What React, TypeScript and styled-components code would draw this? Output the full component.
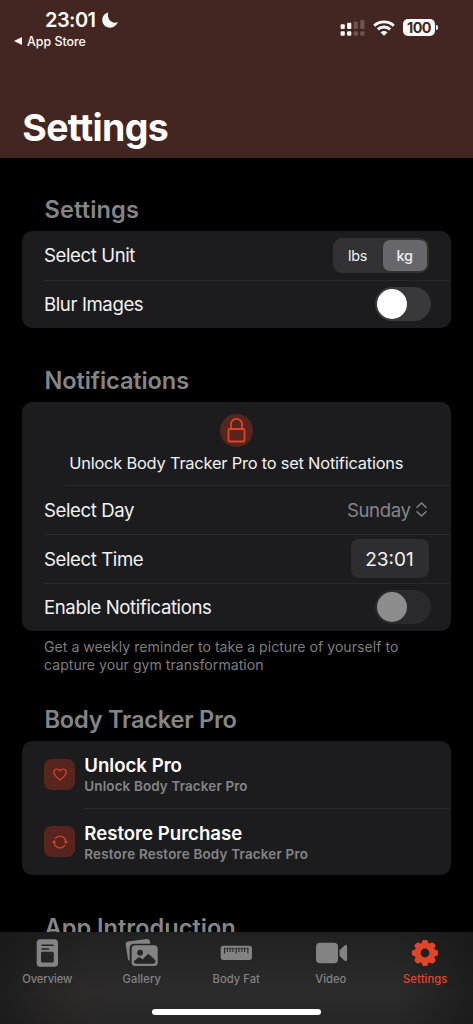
import React from 'react';
import styled, { createGlobalStyle } from 'styled-components';

const Global = createGlobalStyle`
  * { box-sizing: border-box; }
  body { margin: 0; background: #000; }
`;

const Screen = styled.div`
  width: 473px;
  height: 1024px;
  display: flex;
  flex-direction: column;
  overflow: hidden;
  background: #000;
  color: #f2f2f3;
  font-family: Inter, 'Liberation Sans', sans-serif;
`;

const Header = styled.header`
  height: 158px;
  flex: none;
  background: #432621;
  display: flex;
  flex-direction: column;
  color: #fffdfb;
`;

const StatusBar = styled.div`
  display: flex;
  justify-content: space-between;
  align-items: center;
  height: 20px;
  margin-top: 10px;
  padding: 0 38px 0 45px;
`;

const StatusGroup = styled.div<{ $gap: number; $top?: number }>`
  display: flex;
  align-items: center;
  gap: ${(p) => p.$gap}px;
  padding-top: ${(p) => p.$top ?? 0}px;
`;

const Clock = styled.span`
  font-size: 20px;
  line-height: 20px;
  font-weight: 600;
  letter-spacing: -0.55px;
  width: 52px;
  white-space: nowrap;
`;

const Battery = styled.div`
  position: relative;
  width: 32px;
  height: 17px;
  border-radius: 5px;
  background: #fffdfb;
  color: #432621;
  font-size: 14.4px;
  font-weight: 700;
  line-height: 17px;
  text-align: center;
  letter-spacing: -0.6px;
  &::after {
    content: '';
    position: absolute;
    right: -3px;
    top: 6px;
    width: 2px;
    height: 5px;
    border-radius: 0 2px 2px 0;
    background: #fffdfb;
  }
`;

const BackLink = styled.div`
  display: flex;
  align-items: center;
  gap: 5px;
  height: 16px;
  margin-top: 3px;
  padding-left: 14px;
  font-size: 12.4px;
  font-weight: 500;
  letter-spacing: 0;
`;

const Title = styled.h1`
  margin: auto 0 7px 22.3px;
  font-size: 37.5px;
  line-height: 46px;
  font-weight: 700;
  letter-spacing: -0.68px;
`;

const Content = styled.main`
  flex: 1;
  min-height: 0;
  overflow: hidden;
  padding: 0 22.5px 0 22px;
`;

const Section = styled.section<{ $top: number }>`
  padding-top: ${(p) => p.$top}px;
`;

const Heading = styled.h2<{ $track: number }>`
  margin: 0 0 7px 22.5px;
  font-size: 23.6px;
  line-height: 28px;
  font-weight: 600;
  letter-spacing: ${(p) => p.$track}px;
  color: #858586;
  white-space: nowrap;
`;

const Card = styled.div`
  border-radius: 10.5px;
  background: #1c1c1e;
  overflow: hidden;
`;

const Row = styled.div`
  height: 48.5px;
  margin-left: 22px;
  padding-right: 22px;
  display: flex;
  align-items: center;
  justify-content: space-between;
  & + & {
    padding-top: 1px;
    box-shadow: inset 0 1px #29292b;
  }
`;

const Label = styled.span<{ $track?: number }>`
  font-size: 18.6px;
  letter-spacing: ${(p) => p.$track ?? -0.4}px;
  white-space: nowrap;
`;

const Segmented = styled.div`
  width: 96px;
  height: 35px;
  padding: 2px;
  display: grid;
  grid-template-columns: 46px 44px;
  column-gap: 2px;
  border-radius: 9px;
  background: #323235;
`;

const Segment = styled.div<{ $on?: boolean }>`
  display: grid;
  place-items: center;
  border-radius: 7px;
  font-size: 14.4px;
  font-weight: ${(p) => (p.$on ? 500 : 400)};
  letter-spacing: -0.3px;
  background: ${(p) => (p.$on ? '#67666b' : 'transparent')};
`;

const Switch = styled.div<{ $disabled?: boolean }>`
  width: 56px;
  height: 34px;
  margin-right: -2px;
  padding: 2px;
  border-radius: 17px;
  background: ${(p) => (p.$disabled ? '#2a2a2c' : '#39393b')};
  &::before {
    content: '';
    display: block;
    width: 30px;
    height: 30px;
    border-radius: 50%;
    background: ${(p) => (p.$disabled ? '#8d8d8e' : '#fff')};
  }
`;

const LockedNotice = styled.div`
  height: 82.5px;
  display: flex;
  flex-direction: column;
  align-items: center;
  padding-top: 12px;
  gap: 5px;
`;

const NoticeText = styled.div`
  font-size: 16.4px;
  line-height: 22px;
  letter-spacing: -0.2px;
  white-space: nowrap;
`;

const LockBadge = styled.div`
  width: 33px;
  height: 33px;
  flex: none;
  border-radius: 50%;
  background: #57251d;
  display: grid;
  place-items: center;
`;

const Divider = styled.div<{ $inset: number }>`
  height: 1px;
  margin-left: ${(p) => p.$inset}px;
  background: #29292b;
`;

const Picker = styled.div`
  display: flex;
  align-items: center;
  gap: 5.5px;
  padding-right: 1.5px;
  color: #858587;
`;

const TimeField = styled.div`
  width: 78px;
  height: 39px;
  padding-top: 1px;
  border-radius: 8px;
  background: #2e2e31;
  display: grid;
  place-items: center;
  font-size: 19px;
  letter-spacing: 0;
`;

const Footnote = styled.p`
  margin: 7px 0 0 22px;
  font-size: 14.1px;
  line-height: 17.5px;
  letter-spacing: 0.02px;
  color: #7d7d7e;
  white-space: nowrap;
`;

const ProRow = styled.div`
  height: 66.5px;
  padding: 0 0 0 22px;
  display: flex;
  align-items: center;
  gap: 9.3px;
`;

const IconTile = styled.div`
  width: 31px;
  height: 31px;
  border-radius: 8px;
  background: #57251d;
  display: grid;
  place-items: center;
`;

const ProText = styled.div`
  padding-top: 2px;
`;

const ProTitle = styled.div<{ $track: number }>`
  font-size: 18.6px;
  line-height: 22px;
  font-weight: 600;
  letter-spacing: ${(p) => p.$track}px;
  color: #fff;
`;

const ProCaption = styled.div<{ $track: number }>`
  font-size: 13.4px;
  line-height: 20px;
  font-weight: 600;
  letter-spacing: ${(p) => p.$track}px;
  color: #858587;
`;

const TabBar = styled.nav`
  position: relative;
  flex: none;
  height: 92px;
  display: grid;
  grid-template-columns: repeat(5, 94.5px);
  background:
    radial-gradient(ellipse 60px 40px at 66px 70px, rgba(72, 38, 34, 0.14), transparent),
    linear-gradient(90deg, rgba(20, 20, 20, 0.6), transparent 18%, transparent 84%, rgba(20, 20, 20, 0.6)),
    linear-gradient(#212122, #2b2b2c 65%, #262627);
`;

const Tab = styled.div<{ $active?: boolean }>`
  display: flex;
  flex-direction: column;
  align-items: center;
  padding-top: 5px;
  gap: 1.5px;
  color: ${(p) => (p.$active ? '#e0452b' : '#838383')};
`;

const TabLabel = styled.span<{ $track: number }>`
  font-size: 11.2px;
  line-height: 16px;
  font-weight: 500;
  letter-spacing: ${(p) => p.$track}px;
`;

const HomeIndicator = styled.div`
  position: absolute;
  left: 152px;
  bottom: 9px;
  width: 169px;
  height: 6px;
  border-radius: 3px;
  background: #fff;
`;

const MoonIcon = () => (
  <svg width="16" height="16" viewBox="0 0 16 16" fill="currentColor">
    <path d="M6.200.5C4.900 5.800 8 10.700 12.800 10.700c1.100 0 2.100-.2 3-.6C14.600 13.600 11.600 15.700 8.200 15.700 3.700 15.700.3 12.400.3 8 .3 4.500 2.600 1.400 6.200.5Z" />
  </svg>
);

const SignalIcon = () => (
  <svg width="25" height="17" viewBox="0 0 25 17" fill="#fffdfb">
    <rect x=".6" y="5.300" width="4.200" height="4.800" rx="1" />
    <rect x="7.100" y="3.800" width="4.200" height="6.300" rx="1" />
    <rect x="13.700" y="2.500" width="4.200" height="7.600" rx="1" opacity=".22" />
    <rect x="20.300" y=".7" width="4.200" height="9.400" rx="1" opacity=".22" />
    <rect x=".6" y="12.300" width="4.200" height="4.500" rx="1" />
    <rect x="7.100" y="12.300" width="4.200" height="4.500" rx="1" />
    <rect x="13.700" y="12.300" width="4.200" height="4.500" rx="1" opacity=".22" />
    <rect x="20.300" y="12.300" width="4.200" height="4.500" rx="1" opacity=".22" />
  </svg>
);

const WifiIcon = () => (
  <svg width="22" height="16" viewBox="0 0 22 16" fill="none" stroke="#fffdfb" strokeWidth="2.900">
    <path d="M1.200 5.700C6.800.6 15.200.6 20.800 5.700" />
    <path d="M4.800 9.400c3.500-3.200 8.900-3.200 12.400 0" />
    <path d="M11 15.800 7.500 12.400c2-1.800 5-1.800 7 0Z" fill="#fffdfb" stroke="none" />
  </svg>
);

const BackIcon = () => (
  <svg width="8" height="8" viewBox="0 0 8 8" fill="currentColor"><path d="M0 4 8 0v8Z" /></svg>
);

const LockIcon = () => (
  <svg width="19" height="27" viewBox="0 0 19 27" fill="none" stroke="#dc452c" strokeWidth="1.800">
    <rect x="1.500" y="12" width="16" height="12.500" rx="1.200" />
    <path d="M4 12V7.300a5.500 5.500 0 0 1 11 0V12" />
  </svg>
);

const ChevronsIcon = () => (
  <svg width="11" height="15" viewBox="0 0 11 15" fill="none" stroke="currentColor" strokeWidth="1.500" strokeLinecap="round" strokeLinejoin="round">
    <path d="M1 5.200 5.500 1 10 5.200M1 9.800 5.500 14 10 9.800" />
  </svg>
);

const HeartIcon = () => (
  <svg width="14" height="13" viewBox="0 0 14 13" fill="none" stroke="#dc452c" strokeWidth="1.200" strokeLinejoin="round">
    <path d="M7 12C3.500 9.500.9 7.100.9 4.300.9 2.400 2.300 1 4 1c1.300 0 2.400.7 3 1.900C7.600 1.700 8.700 1 10 1c1.700 0 3.100 1.400 3.100 3.300C13.100 7.100 10.500 9.500 7 12Z" />
  </svg>
);

const SyncIcon = () => (
  <svg width="16" height="14" viewBox="0 0 16 14" fill="none" stroke="#dc452c" strokeWidth="1.200" strokeLinecap="round">
    <path d="M3.400 3.400a5.800 5.800 0 0 1 10.400 3.400M12.600 10.600A5.800 5.800 0 0 1 2.200 7.200" />
    <path d="m11.700 6.300 2.100 2.600 2.100-2.600ZM.1 7.700 2.200 5.100l2.100 2.600Z" fill="#dc452c" stroke="none" />
  </svg>
);

const OverviewIcon = () => (
  <svg width="34" height="32" viewBox="0 0 34 32">
    <rect x="6.700" y="2.200" width="21.300" height="27.600" rx="3.600" fill="currentColor" />
    <path d="M12 8.200h11M12 12h6.500" stroke="#252526" strokeWidth="1.600" strokeLinecap="round" />
    <rect x="11" y="14.700" width="12.800" height="10.800" rx="1.600" fill="#252526" />
  </svg>
);

const GalleryIcon = () => (
  <svg width="34" height="32" viewBox="0 0 34 32">
    <g transform="translate(-.6 0)">
      <path d="M3.800 23.200 1.300 7.700c-.3-1.700.6-2.900 2.300-3.200L22.300 2c1.700-.2 2.900.6 3.200 2.200l.4 2.500H10.200c-3.200 0-5 1.800-5 5v11.700Z" fill="currentColor" />
      <rect x="7.300" y="8.300" width="26" height="20.700" rx="3.500" fill="currentColor" />
      <circle cx="15.700" cy="15.700" r="2.900" fill="#252526" />
      <path d="m9.500 24.300 4.300-3.700c.7-.6 1.400-.5 2 0l2.100 1.800 5-4.600c.7-.6 1.500-.6 2.200 0l5.900 5.500v1.200c0 1.600-.7 2.200-2.200 2.200h-17c-1.500 0-2.300-.8-2.300-2.400Z" fill="#252526" />
    </g>
  </svg>
);

const RulerIcon = () => (
  <svg width="34" height="32" viewBox="0 0 34 32">
    <rect x="1.700" y="8.800" width="31.300" height="14.200" rx="2.700" fill="currentColor" />
    <path d="M5.500 11v5.500M8.300 11v4M11.100 11v4M13.900 11v4M17.200 11v5.500M20 11v4M22.800 11v4M25.600 11v4M28.900 11v5.500" stroke="#252526" strokeWidth="1.100" />
    <path d="M5 11.300h24.400" stroke="#252526" strokeWidth=".7" />
  </svg>
);

const VideoIcon = () => (
  <svg width="34" height="32" viewBox="0 0 34 32" fill="currentColor">
    <rect x="2" y="5.800" width="22" height="20.500" rx="4" />
    <path d="M25.500 13.300 30.300 8.700c1.200-1.100 2.800-.8 2.800.9v12.900c0 1.700-1.600 2-2.800.9l-4.800-4.600Z" />
  </svg>
);

const GearIcon = () => (
  <svg width="34" height="32" viewBox="0 0 34 32">
    <g fill="currentColor">
      {[0, 45, 90, 135, 180, 225, 270, 315].map((angle) => (
        <path key={angle} d="M13.200 7 14.300 4c.3-.8.800-1.100 1.600-1.100h2.200c.8 0 1.300.3 1.600 1.100L20.800 7Z" transform={`rotate(${angle} 17 16)`} />
      ))}
    </g>
    <circle cx="17" cy="16" r="7.300" fill="none" stroke="currentColor" strokeWidth="5.800" />
  </svg>
);

const tabs = [
  { label: 'Overview', Icon: OverviewIcon, track: -0.08 },
  { label: 'Gallery', Icon: GalleryIcon, track: 0.1 },
  { label: 'Body Fat', Icon: RulerIcon, track: 0.05 },
  { label: 'Video', Icon: VideoIcon, track: -0.02 },
  { label: 'Settings', Icon: GearIcon, track: 0.1, active: true },
];

export default function App() {
  return (
    <Screen>
      <Global />
      <Header>
        <StatusBar>
          <StatusGroup $gap={5}>
            <Clock>23:01</Clock>
            <MoonIcon />
          </StatusGroup>
          <StatusGroup $gap={8} $top={15}>
            <SignalIcon />
            <WifiIcon />
            <Battery>100</Battery>
          </StatusGroup>
        </StatusBar>
        <BackLink><BackIcon />App Store</BackLink>
        <Title>Settings</Title>
      </Header>

      <Content>
        <Section $top={38}>
          <Heading $track={0.12}>Settings</Heading>
          <Card>
            <Row>
              <Label>Select Unit</Label>
              <Segmented>
                <Segment>lbs</Segment>
                <Segment $on>kg</Segment>
              </Segmented>
            </Row>
            <Row>
              <Label>Blur Images</Label>
              <Switch />
            </Row>
          </Card>
        </Section>

        <Section $top={39}>
          <Heading $track={-0.12}>Notifications</Heading>
          <Card>
            <LockedNotice>
              <LockBadge><LockIcon /></LockBadge>
              <NoticeText>Unlock Body Tracker Pro to set Notifications</NoticeText>
            </LockedNotice>
            <Divider $inset={43} />
            <Row>
              <Label>Select Day</Label>
              <Picker><Label>Sunday</Label><ChevronsIcon /></Picker>
            </Row>
            <Row>
              <Label>Select Time</Label>
              <TimeField>23:01</TimeField>
            </Row>
            <Row>
              <Label>Enable Notifications</Label>
              <Switch $disabled />
            </Row>
          </Card>
          <Footnote>
            Get a weekly reminder to take a picture of yourself to<br />
            capture your gym transformation
          </Footnote>
        </Section>

        <Section $top={33}>
          <Heading $track={-0.23}>Body Tracker Pro</Heading>
          <Card>
            <ProRow>
              <IconTile><HeartIcon /></IconTile>
              <ProText>
                <ProTitle $track={0}>Unlock Pro</ProTitle>
                <ProCaption $track={0.16}>Unlock Body Tracker Pro</ProCaption>
              </ProText>
            </ProRow>
            <Divider $inset={62} />
            <ProRow>
              <IconTile><SyncIcon /></IconTile>
              <ProText>
                <ProTitle $track={0}>Restore Purchase</ProTitle>
                <ProCaption $track={0.21}>Restore Restore Body Tracker Pro</ProCaption>
              </ProText>
            </ProRow>
          </Card>
        </Section>

        <Section $top={38.5}>
          <Heading $track={0}>App Introduction</Heading>
        </Section>
      </Content>

      <TabBar>
        {tabs.map(({ label, Icon, track, active }) => (
          <Tab key={label} $active={active}>
            <Icon />
            <TabLabel $track={track}>{label}</TabLabel>
          </Tab>
        ))}
        <HomeIndicator />
      </TabBar>
    </Screen>
  );
}
